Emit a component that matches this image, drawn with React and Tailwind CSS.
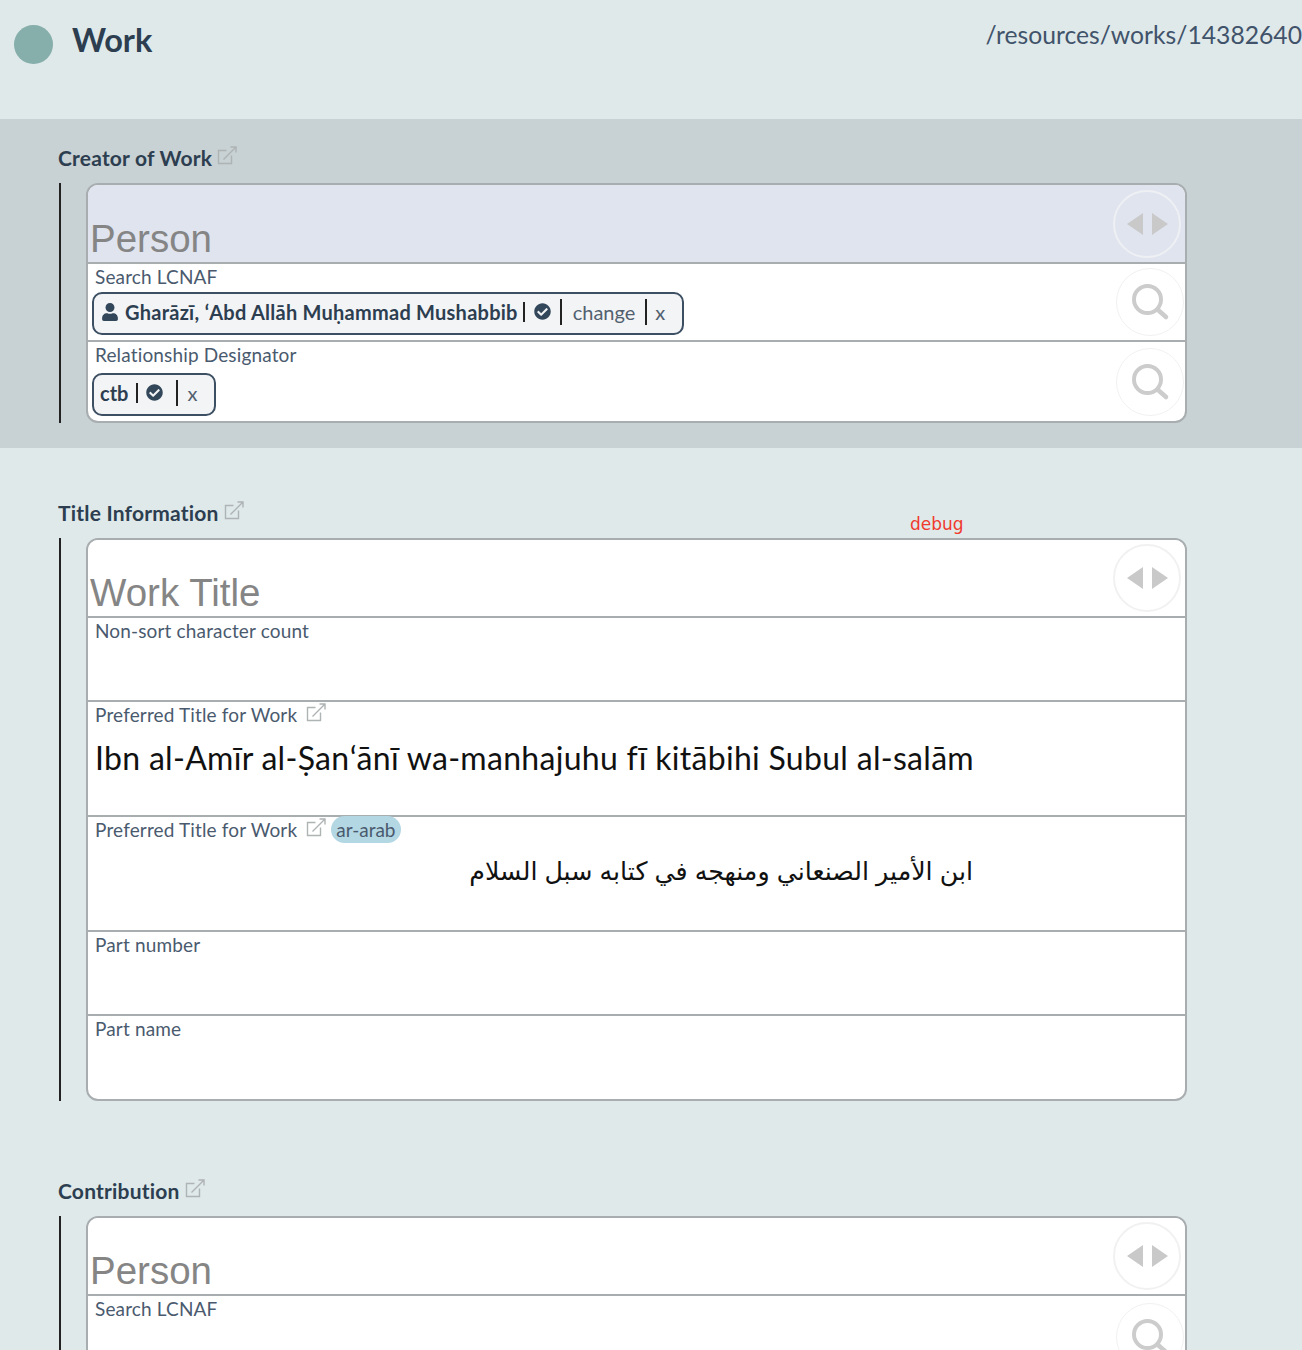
import { FaCheckCircle, FaUser } from 'react-icons/fa'

const LATO = 'font-["Lato","Liberation_Sans",sans-serif]'

function ExternalIcon({ className = '' }) {
  return (
    <svg viewBox="0 0 20 20" fill="none" stroke="currentColor" strokeWidth="1.4" className={`w-5 h-5 text-[#aeb3b4] ${className}`}>
      <path d="M14.5 9.5v8h-13v-13h8" />
      <path d="M6.5 13.5 18.5 1.5M13.5 1h5.500v5.500" />
    </svg>
  )
}

function RoundButton({ children, tone = 'border-[#f1f1f1]', className = '' }) {
  return (
    <div className={`w-[68px] h-[68px] rounded-full border flex items-center justify-center shrink-0 ${tone} ${className}`}>
      {children}
    </div>
  )
}

function ArrowsButton({ tone }) {
  return (
    <RoundButton tone={tone} className="mr-[4px]">
      <svg viewBox="0 0 42 22" className="w-[42px] h-[22px] ml-[2px] fill-[#c9c9c9]">
        <path d="M16 0v22L0 11zM25 0v22l16-11z" />
      </svg>
    </RoundButton>
  )
}

function SearchButton() {
  return (
    <RoundButton className="mr-[1px]">
      <svg viewBox="0 0 40 40" fill="none" stroke="#cccccc" className="w-[40px] h-[40px]">
        <circle cx="17.500" cy="17.500" r="13.500" strokeWidth="4" />
        <path d="m27.500 27.500 8.500 7.500" strokeWidth="4.500" strokeLinecap="round" />
      </svg>
    </RoundButton>
  )
}

function SectionTitle({ children, debug }) {
  return (
    <div className="flex h-[24px] items-center pl-[58px] pb-[4px]">
      <div className={debug ? 'flex items-center w-[852px]' : 'flex items-center'}>
        <h2 className="text-[21px] tracking-[0.2px] font-bold text-[#2c3e50] leading-none">{children}</h2>
        <ExternalIcon className="ml-[5px] -mt-[2px]" />
      </div>
      {debug && <span className='font-["DejaVu_Sans",sans-serif] text-[#f03a2e] text-[17px] mt-[26px]'>debug</span>}
    </div>
  )
}

function TemplateBox({ children }) {
  return (
    <div className="flex pl-[59px] mt-[12px]">
      <div className="w-[1.500px] bg-[#222] shrink-0" />
      <div className="ml-[25.500px] w-[1101px] border-2 border-[#a8adaf] rounded-[12px] overflow-hidden bg-white divide-y-2 divide-[#a8adaf]">
        {children}
      </div>
    </div>
  )
}

function HeaderRow({ title, tone, arrowTone, h = 'h-[78px]' }) {
  return (
    <div className={`${h} flex justify-between items-center ${tone}`}>
      <div className='self-end pl-[2px] font-["Liberation_Sans",sans-serif] text-[38.500px] leading-[46px] text-[#858585]'>{title}</div>
      <ArrowsButton tone={arrowTone} />
    </div>
  )
}

function Label({ children }) {
  return <div className="text-[19px] tracking-[0.15px] leading-[24px] pt-[1px] pl-[7px] text-[#4a5a6e]">{children}</div>
}

function Sep() {
  return <span className="w-[2px] h-[26px] bg-[#222] shrink-0" />
}

function Pill({ children, className = '' }) {
  return (
    <div className={`inline-flex items-center h-[43px] ml-[4px] pr-[17px] pb-[4px] border-2 border-[#3d4f63] rounded-[10px] bg-[#f3f4f6] text-[20px] text-[#2c3e50] whitespace-nowrap ${className}`}>
      {children}
    </div>
  )
}

function TextRow({ label, external, lang, h = 'h-[84px]', children }) {
  return (
    <div className={h}>
      <div className="flex items-center h-[25px]">
        <Label>{label}</Label>
        {external && <ExternalIcon className="ml-[9px] -mt-[4px]" />}
        {lang && <span className="ml-[5px] rounded-full bg-[#b4d7e4] px-[5px] text-[19px] leading-[27px] text-[#4a5a6e]">{lang}</span>}
      </div>
      {children}
    </div>
  )
}

export default function App() {
  return (
    <div className={`w-[1302px] h-[1350px] overflow-hidden bg-[#dfe9ea] ${LATO}`}>
      <header className="h-[119px] flex justify-between">
        <div className="flex items-start">
          <div className="w-[39px] h-[39px] rounded-full bg-[#86aeab] ml-[14px] mt-[25px]" />
          <h1 className="ml-[19px] mt-[18px] text-[32.500px] leading-[44px] font-bold text-[#2c3e50]">Work</h1>
        </div>
        <div className="mt-[18px] text-[24.700px] leading-[34px] text-[#41536a] whitespace-nowrap">/resources/works/14382640</div>
      </header>

      <section className="h-[329px] bg-[#c8d1d3] pt-[28px]">
        <SectionTitle>Creator of Work</SectionTitle>
        <TemplateBox>
          <HeaderRow title="Person" h="h-[79px]" tone="bg-[#dfe4ef]" arrowTone="border-[#eef0f3] border-2" />
          <div className="h-[78px] flex justify-between items-center">
            <div className="self-start">
              <Label>Search LCNAF</Label>
              <Pill className="mt-[3px] pl-[7px]">
                <FaUser className="w-[18px] h-[18px] text-[#33475b] mr-[6px]" />
                <b className="tracking-[0.25px]">Gharāzī, ʻAbd Allāh Muḥammad Mushabbib</b>
                <span className="w-[2px] h-[20px] bg-[#222] ml-[5px]" />
                <FaCheckCircle className="w-[17px] h-[17px] ml-[9px] mr-[9px] text-[#33475b]" />
                <Sep />
                <span className="ml-[11px] mr-[10px] text-[#51606f]">change</span>
                <Sep />
                <span className="ml-[8px] text-[#51606f]">x</span>
              </Pill>
            </div>
            <SearchButton />
          </div>
          <div className="h-[79px] flex justify-between items-center">
            <div className="self-start">
              <Label>Relationship Designator</Label>
              <Pill className="mt-[6px] pl-[6px]">
                <b>ctb</b>
                <span className="w-[2px] h-[20px] bg-[#222] ml-[8px]" />
                <FaCheckCircle className="w-[17px] h-[17px] ml-[8px] mr-[13px] text-[#33475b]" />
                <Sep />
                <span className="ml-[9px] text-[#51606f]">x</span>
              </Pill>
            </div>
            <SearchButton />
          </div>
        </TemplateBox>
      </section>

      <section className="pt-[54px]">
        <SectionTitle debug>Title Information</SectionTitle>
        <TemplateBox>
          <HeaderRow title="Work Title" tone="bg-white" arrowTone="border-[#f1f1f1] border-2" />
          <TextRow label="Non-sort character count" />
          <TextRow label="Preferred Title for Work" external h="h-[115px]">
            <div className="pl-[7px] mt-[11px] text-[32px] tracking-[0.3px] leading-[40px] text-[#111]">Ibn al-Amīr al-Ṣanʻānī wa-manhajuhu fī kitābihi Subul al-salām</div>
          </TextRow>
          <TextRow label="Preferred Title for Work" external lang="ar-arab" h="h-[115px]">
            <div dir="rtl" className='ml-[7px] w-[878px] mt-[9px] font-["Liberation_Sans","DejaVu_Sans",sans-serif] text-[25.300px] leading-[40px] text-[#111]'>ابن الأمير الصنعاني ومنهجه في كتابه سبل السلام</div>
          </TextRow>
          <TextRow label="Part number" />
          <TextRow label="Part name" h="h-[83px]" />
        </TemplateBox>
      </section>

      <section className="pt-[79px]">
        <SectionTitle>Contribution</SectionTitle>
        <TemplateBox>
          <HeaderRow title="Person" tone="bg-white" arrowTone="border-[#f1f1f1] border-2" />
          <div className="h-[82px] flex justify-between items-center">
            <div className="self-start">
              <Label>Search LCNAF</Label>
            </div>
            <SearchButton />
          </div>
        </TemplateBox>
      </section>
    </div>
  )
}
